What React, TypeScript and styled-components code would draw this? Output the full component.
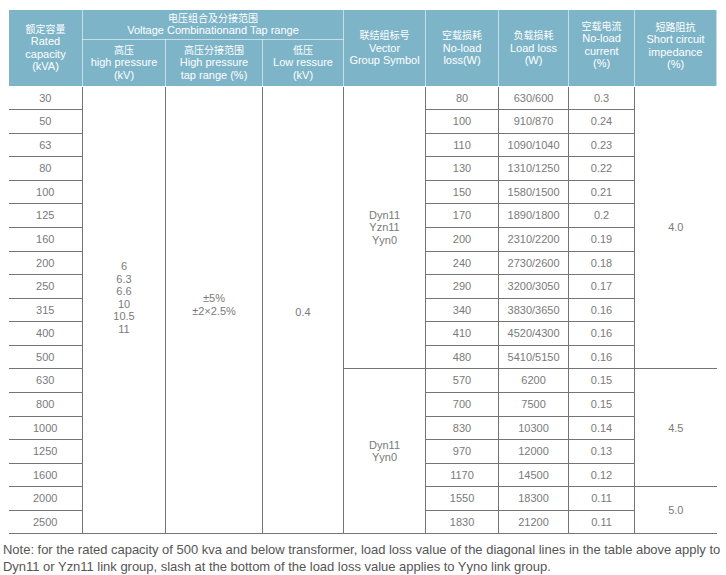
import styled, { createGlobalStyle } from "styled-components";

const GlobalStyle = createGlobalStyle`
	html, body {
		margin: 0;
		padding: 0;
		background: #ffffff;
	}
	body {
		font-family: "Liberation Sans", Arial, "Noto Sans CJK SC", sans-serif;
	}
`;

type Row = [number, number, string, string];

const rows: Row[] = [
	[30, 80, "630/600", "0.3"],
	[50, 100, "910/870", "0.24"],
	[63, 110, "1090/1040", "0.23"],
	[80, 130, "1310/1250", "0.22"],
	[100, 150, "1580/1500", "0.21"],
	[125, 170, "1890/1800", "0.2"],
	[160, 200, "2310/2200", "0.19"],
	[200, 240, "2730/2600", "0.18"],
	[250, 290, "3200/3050", "0.17"],
	[315, 340, "3830/3650", "0.16"],
	[400, 410, "4520/4300", "0.16"],
	[500, 480, "5410/5150", "0.16"],
	[630, 570, "6200", "0.15"],
	[800, 700, "7500", "0.15"],
	[1000, 830, "10300", "0.14"],
	[1250, 970, "12000", "0.13"],
	[1600, 1170, "14500", "0.12"],
	[2000, 1550, "18300", "0.11"],
	[2500, 1830, "21200", "0.11"],
];

const widths = [74, 83, 97, 81, 82, 73, 70, 66, 82];

// vector group / impedance blocks start at these row indexes
const vectorGroups: Record<number, { span: number; lines: string[] }> = {
	0: { span: 12, lines: ["Dyn11", "Yzn11", "Yyn0"] },
	12: { span: 7, lines: ["Dyn11", "Yyn0"] },
};
const impedance: Record<number, { span: number; value: string }> = {
	0: { span: 12, value: "4.0" },
	12: { span: 5, value: "4.5" },
	17: { span: 2, value: "5.0" },
};

const Lines = ({ lines }: { lines: string[] }) => (
	<>
		{lines.map((l, i) => (
			<Line key={i}>{l}</Line>
		))}
	</>
);

export default function App() {
	return (
		<Page>
			<GlobalStyle />
			<Table>
				<colgroup>
					{widths.map((w, i) => (
						<col key={i} style={{ width: w }} />
					))}
				</colgroup>
				<thead>
					<TopRow>
						<Head rowSpan={2}>
							<Cn>额定容量</Cn>
							<Lines lines={["Rated", "capacity", "(kVA)"]} />
						</Head>
						<Head colSpan={3}>
							<Cn>电压组合及分接范围</Cn>
							<Line>Voltage Combinationand Tap range</Line>
						</Head>
						<Head rowSpan={2}>
							<Cn>联结组标号</Cn>
							<Lines lines={["Vector", "Group Symbol"]} />
						</Head>
						<Head rowSpan={2}>
							<Cn>空载损耗</Cn>
							<Lines lines={["No-load", "loss(W)"]} />
						</Head>
						<Head rowSpan={2}>
							<Cn>负载损耗</Cn>
							<Lines lines={["Load loss", "(W)"]} />
						</Head>
						<Head rowSpan={2} $lift={6}>
							<Cn>空载电流</Cn>
							<Lines lines={["No-load", "current", "(%)"]} />
						</Head>
						<Head rowSpan={2} $lift={4}>
							<Cn>短路阻抗</Cn>
							<Lines lines={["Short circuit", "impedance", "(%)"]} />
						</Head>
					</TopRow>
					<SubRow>
						<Head>
							<Cn>高压</Cn>
							<Lines lines={["high pressure", "(kV)"]} />
						</Head>
						<Head>
							<Cn>高压分接范围</Cn>
							<Lines lines={["High pressure", "tap range (%)"]} />
						</Head>
						<Head>
							<Cn>低压</Cn>
							<Lines lines={["Low ressure", "(kV)"]} />
						</Head>
					</SubRow>
				</thead>
				<tbody>
					{rows.map(([cap, noLoad, load, current], i) => (
						<DataRow key={cap}>
							<Cell>{cap}</Cell>
							{i === 0 && (
								<>
									<Cell rowSpan={rows.length} $lift={24}>
										<Lines lines={["6", "6.3", "6.6", "10", "10.5", "11"]} />
									</Cell>
									<Cell rowSpan={rows.length} $lift={10}>
										<Lines lines={["±5%", "±2×2.5%"]} />
									</Cell>
									<Cell rowSpan={rows.length} $lift={-4}>
										0.4
									</Cell>
								</>
							)}
							{vectorGroups[i] && (
								<Cell rowSpan={vectorGroups[i].span}>
									<Lines lines={vectorGroups[i].lines} />
								</Cell>
							)}
							<Cell>{noLoad}</Cell>
							<Cell>{load}</Cell>
							<Cell>{current}</Cell>
							{impedance[i] && (
								<Cell rowSpan={impedance[i].span} $last>
									{impedance[i].value}
								</Cell>
							)}
						</DataRow>
					))}
				</tbody>
			</Table>
			<Note>
				<Line>
					Note: for the rated capacity of 500 kva and below transformer, load loss value of the
					diagonal lines in the table above apply to
				</Line>
				<Line>
					Dyn11 or Yzn11 link group, slash at the bottom of the load loss value applies to Yyno
					link group.
				</Line>
			</Note>
		</Page>
	);
}

const Page = styled.div`
	width: 726px;
	padding-top: 10px;
`;
const Table = styled.table`
	width: 708px;
	margin-left: 8px;
	table-layout: fixed;
	border-collapse: collapse;
	border-spacing: 0;
`;
const TopRow = styled.tr`
	height: 29px;
`;
const SubRow = styled.tr`
	height: 47px;
`;
const Head = styled.th<{ $lift?: number }>`
	background: #7db4c8;
	color: #ffffff;
	font-weight: normal;
	font-size: 11px;
	line-height: 12.5px;
	text-align: center;
	vertical-align: middle;
	padding: 0 2px ${(p) => p.$lift ?? 0}px;
	border: 1px solid rgba(255, 255, 255, 0.55);
	border-top: none;
`;
const Cn = styled.div`
	font-family: "Noto Sans CJK SC", sans-serif;
	font-size: 10px;
	line-height: 12.5px;
`;
const Line = styled.div`
	white-space: nowrap;
`;
const DataRow = styled.tr`
	height: 23.58px;
`;
const Cell = styled.td<{ $lift?: number; $last?: boolean }>`
	color: #7a7a7a;
	font-size: 11px;
	line-height: 12.5px;
	text-align: center;
	vertical-align: middle;
	padding: 0 0 ${(p) => Math.max(p.$lift ?? 0, 0)}px;
	padding-top: ${(p) => Math.max(-(p.$lift ?? 0), 0)}px;
	border-bottom: 1px solid #747474;
	border-right: ${(p) => (p.$last ? "none" : "1px solid #747474")};
`;
const Note = styled.div`
	margin-top: 8px;
	padding-left: 3px;
	color: #555555;
	font-size: 13px;
	line-height: 16.5px;
	letter-spacing: -0.02px;
`;
